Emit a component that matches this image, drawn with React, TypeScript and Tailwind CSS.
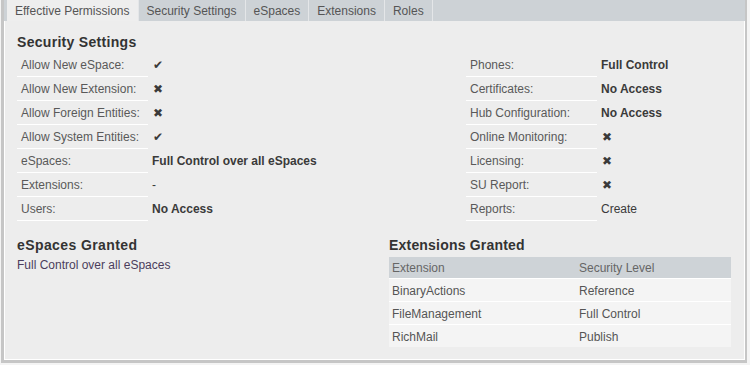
import React from "react";

type Val = { text?: string; bold?: boolean; icon?: "check" | "cross" };

const LEFT: { label: string; value: Val }[] = [
  { label: "Allow New eSpace:", value: { icon: "check" } },
  { label: "Allow New Extension:", value: { icon: "cross" } },
  { label: "Allow Foreign Entities:", value: { icon: "cross" } },
  { label: "Allow System Entities:", value: { icon: "check" } },
  { label: "eSpaces:", value: { text: "Full Control over all eSpaces", bold: true } },
  { label: "Extensions:", value: { text: "-" } },
  { label: "Users:", value: { text: "No Access", bold: true } },
];

const RIGHT: { label: string; value: Val }[] = [
  { label: "Phones:", value: { text: "Full Control", bold: true } },
  { label: "Certificates:", value: { text: "No Access", bold: true } },
  { label: "Hub Configuration:", value: { text: "No Access", bold: true } },
  { label: "Online Monitoring:", value: { icon: "cross" } },
  { label: "Licensing:", value: { icon: "cross" } },
  { label: "SU Report:", value: { icon: "cross" } },
  { label: "Reports:", value: { text: "Create" } },
];

const TABS = ["Effective Permissions", "Security Settings", "eSpaces", "Extensions", "Roles"];

const EXTENSIONS = [
  ["BinaryActions", "Reference"],
  ["FileManagement", "Full Control"],
  ["RichMail", "Publish"],
];

function ValueCell({ v }: { v: Val }) {
  if (v.icon) {
    return (
      <span className="pl-[5px] text-[12px] text-[#3a3a3a] font-['DejaVu_Sans',sans-serif]">
        {v.icon === "check" ? "\u2714" : "\u2716"}
      </span>
    );
  }
  return (
    <span className={`pl-[4px] text-[#3a3a3a] ${v.bold ? "font-bold" : ""}`}>{v.text}</span>
  );
}

function Rows({ rows }: { rows: { label: string; value: Val }[] }) {
  return (
    <div className="flex flex-col">
      {rows.map((r) => (
        <div key={r.label} className="flex h-[24px] items-center">
          <div className="w-[131px] h-full flex items-center pl-[4px] pt-[1px] border-b border-white text-[#595959]">
            {r.label}
          </div>
          <ValueCell v={r.value} />
        </div>
      ))}
    </div>
  );
}

export default function App() {
  return (
    <div className="w-[750px] h-[365px] bg-[#f4f4f4] pl-[1px] pb-[2px] font-['Liberation_Sans',Arial,sans-serif] text-[12px]">
      <div className="w-[746px] h-full flex flex-col border-l-[3px] border-r-[2px] border-b-[3px] border-[#c6c6c6]">
        {/* Tab strip */}
        <div className="h-[21px] bg-[#cdd2d6] flex pl-[3px]">
          {TABS.map((t, i) => (
            <div
              key={t}
              className={`h-full px-[8px] pt-[1px] flex items-center border-r border-[#e4e6e8] text-[#555] ${
                i === 0 ? "bg-[#eeeeee]" : ""
              }`}
            >
              {t}
            </div>
          ))}
        </div>

        {/* Panel */}
        <div className="flex-1 bg-[#ededed] border border-t-0 border-white pl-[12px] pr-[11px]">
          <h2 className="mt-[12px] h-[18px] leading-[18px] text-[14px] font-bold text-[#333] tracking-[0.3px]">
            Security Settings
          </h2>
          <div className="mt-[2px] grid grid-cols-[449px_1fr]">
            <Rows rows={LEFT} />
            <Rows rows={RIGHT} />
          </div>

          <div className="mt-[15px] grid grid-cols-[372px_1fr]">
            <div>
              <h2 className="h-[18px] leading-[18px] text-[14px] font-bold text-[#333] tracking-[0.4px]">
                eSpaces Granted
              </h2>
              <p className="mt-[4px] leading-[14px] text-[#4b3d5c]">Full Control over all eSpaces</p>
            </div>
            <div className="w-[342px]">
              <h2 className="h-[18px] leading-[18px] text-[14px] font-bold text-[#333] tracking-[0.2px]">
                Extensions Granted
              </h2>
              <div className="mt-[3px]">
                <div className="h-[21px] pt-[1px] bg-[#ced3d7] flex items-center text-[#666]">
                  <span className="w-[190px] pl-[3px]">Extension</span>
                  <span>Security Level</span>
                </div>
                {EXTENSIONS.map(([n, l]) => (
                  <div
                    key={n}
                    className="h-[23px] pt-[1px] bg-[#f4f4f4] border-t border-white flex items-center text-[#555]"
                  >
                    <span className="w-[190px] pl-[3px]">{n}</span>
                    <span>{l}</span>
                  </div>
                ))}
              </div>
            </div>
          </div>
        </div>
      </div>
    </div>
  );
}
